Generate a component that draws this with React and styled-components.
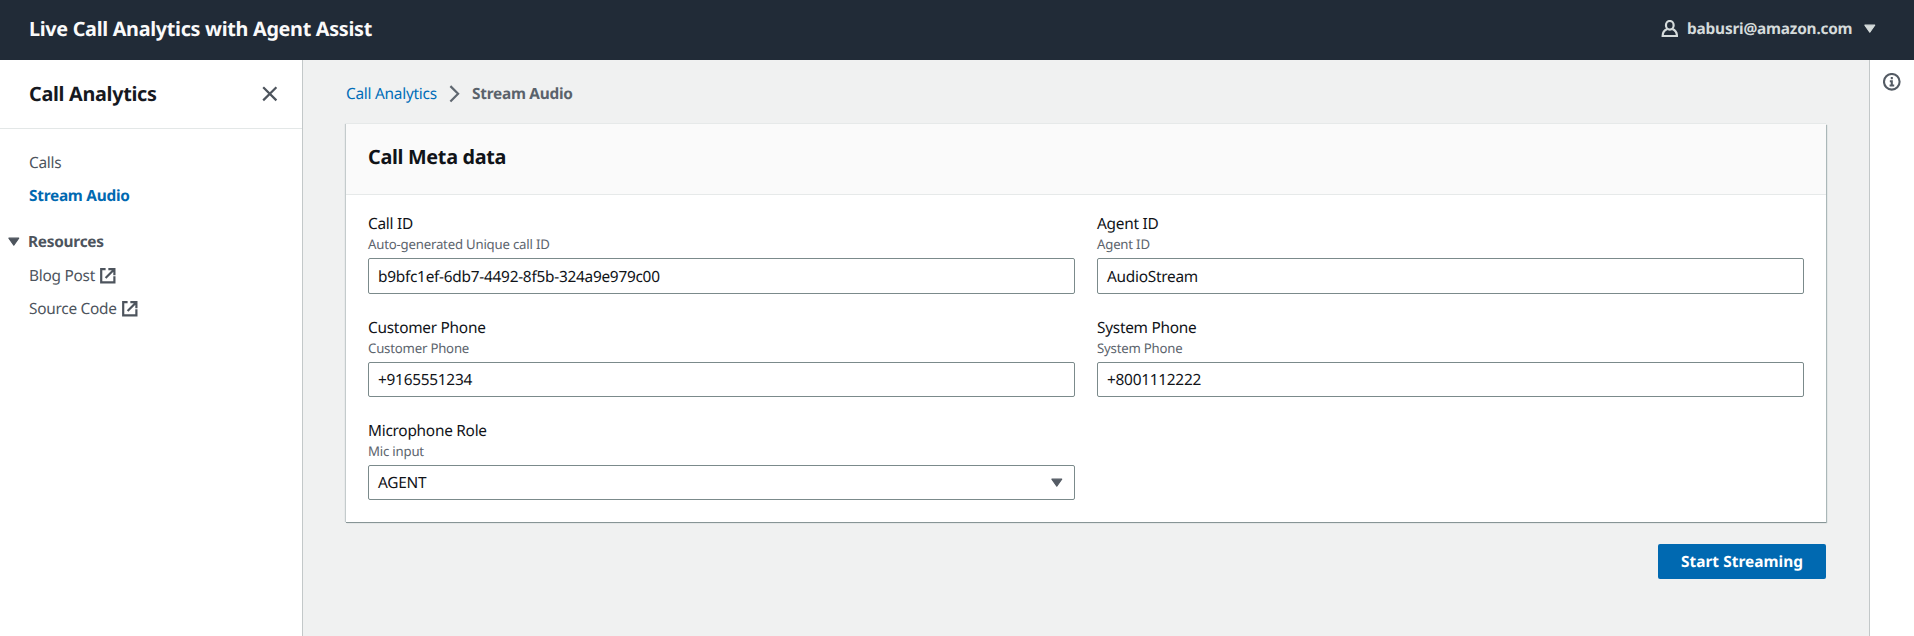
import React from 'react';
import styled, { createGlobalStyle } from 'styled-components';

const GlobalStyle = createGlobalStyle`
  *, *::before, *::after { box-sizing: border-box; }
  html, body, #root { height: 100%; }
  body {
    margin: 0;
    overflow: hidden;
    font-family: 'Noto Sans', 'Open Sans', sans-serif;
    font-size: 15.4px;
    line-height: 24px;
    letter-spacing: -0.26px;
    text-rendering: geometricPrecision;
    color: #101318;
    background: #f0f1f1;
  }
`;

const Page = styled.div`
  display: flex;
  flex-direction: column;
  height: 636px;
`;

const TopBar = styled.header`
  display: flex;
  justify-content: space-between;
  align-items: center;
  flex: 0 0 60px;
  padding: 0 35px 3px 29px;
  background: #212b37;
`;

const AppTitle = styled.div`
  font-size: 19.8px;
  letter-spacing: -0.3px;
  font-weight: 700;
  line-height: 24px;
  color: #fafafa;
`;

const UserMenu = styled.div`
  display: flex;
  align-items: center;
  font-weight: 700;
  color: #d5dbdb;
`;

const UserName = styled.span`
  margin: 0 9px 0 9px;
  letter-spacing: -0.22px;
`;

const Icon = styled.svg`
  display: block;
  flex: none;
  width: 17.6px;
  height: 17.6px;
  fill: none;
  stroke: currentColor;
  stroke-width: 2;
`;

const Body = styled.div`
  display: flex;
  flex: 1;
  min-height: 0;
`;

const Sidebar = styled.nav`
  flex: 0 0 303px;
  background: #fff;
  border-right: 1px solid #c3c8c9;
  color: #4d545d;
`;

const SidebarHeader = styled.div`
  display: flex;
  align-items: center;
  justify-content: space-between;
  height: 69px;
  padding: 0 23px 0 29px;
  border-bottom: 1px solid #e3e7e7;
`;

const SidebarTitle = styled.h2`
  margin: 0;
  font-size: 19.8px;
  letter-spacing: -0.29px;
  line-height: 24px;
  color: #16191f;
`;

const NavList = styled.div`
  display: flex;
  flex-direction: column;
  gap: 9px;
  padding: 22px 29px 0;
`;

const NavLink = styled.a`
  display: flex;
  align-items: center;
  gap: 4.5px;
  height: 24px;
  color: ${(p) => (p.$active ? '#0069b1' : 'inherit')};
  font-weight: ${(p) => (p.$active ? 700 : 400)};
`;

const NavSection = styled.div`
  display: flex;
  align-items: center;
  gap: 5.4px;
  height: 24px;
  margin: 13px 0 1px -24px;
  font-weight: 700;
`;

const Main = styled.main`
  flex: 1;
  padding: 22px 43px 0;
  background: #f0f1f1;
`;

const Breadcrumbs = styled.div`
  display: flex;
  align-items: center;
  height: 24px;
  color: #5f6770;
`;

const Crumb = styled.span`
  color: ${(p) => (p.$current ? '#5a626b' : '#006db8')};
  font-weight: ${(p) => (p.$current ? 700 : 400)};
`;

const CrumbIcon = styled.span`
  margin: 0 8.5px 0 9.2px;
`;

const Card = styled.section`
  height: 398px;
  margin-top: 18px;
  background: #fff;
  box-shadow: 0 -1px 0 #e6e9e9, 0 1px 0 #879596, 1px 1px 1px #aab7b8, -1px 0 1px #c4cbcc;
`;

const CardHeader = styled.div`
  display: flex;
  align-items: center;
  height: 71px;
  padding: 0 22px 5px;
  background: #fafafa;
  border-bottom: 1px solid #e6e9e9;
`;

const CardTitle = styled.h2`
  margin: 0;
  font-size: 19.8px;
  letter-spacing: -0.3px;
  line-height: 24px;
`;

const FormGrid = styled.div`
  display: grid;
  grid-template-columns: 1fr 1fr;
  column-gap: 22px;
  grid-template-rows: 104px 103px 84px;
  padding: 17px 22px 0;
`;

const Field = styled.label`
  display: flex;
  flex-direction: column;
`;

const Label = styled.span`
  line-height: 24px;
`;

const Hint = styled.span`
  margin-bottom: 5px;
  font-size: 13.2px;
  line-height: 17px;
  letter-spacing: -0.2px;
  color: #5c646d;
`;

const Control = styled.span`
  display: flex;
  align-items: center;
  justify-content: space-between;
  height: ${(p) => (p.$tall ? 36 : 35)}px;
  padding: ${(p) => (p.$tall ? 1 : 0)}px 8px 0 9px;
  border: 1px solid #7b8a8b;
  border-radius: 2px;
`;

const Arrow = styled.span`
  color: #545b64;
`;

const Actions = styled.div`
  display: flex;
  justify-content: flex-end;
  margin-top: 22px;
`;

const PrimaryButton = styled.button`
  display: flex;
  align-items: flex-start;
  justify-content: center;
  width: 168px;
  height: 35px;
  padding: 6px 0 0;
  border: 0;
  border-radius: 2px;
  background: #0069b1;
  color: #fff;
  font: inherit;
  font-weight: 700;
  letter-spacing: 0.05px;
  text-rendering: geometricPrecision;
`;

const ToolsRail = styled.aside`
  display: flex;
  justify-content: center;
  flex: 0 0 45px;
  padding-top: 13px;
  background: #fff;
  border-left: 1px solid #c3c8c9;
  color: #545b64;
`;

const CaretDown = () => (
  <Icon viewBox="0 0 16 16">
    <path d="M3.500 4.700h9l-4.500 6.400z" fill="currentColor" strokeWidth="1" strokeLinejoin="round" />
  </Icon>
);

const External = () => (
  <Icon viewBox="0 0 16 16">
    <path d="M14 8.500V14H2V2h4M8.500 2H14v5.500M6 10l7.700-7.700" />
  </Icon>
);

const fields = [
  { label: 'Call ID', hint: 'Auto-generated Unique call ID', value: 'b9bfc1ef-6db7-4492-8f5b-324a9e979c00', tall: true },
  { label: 'Agent ID', hint: 'Agent ID', value: 'AudioStream', tall: true },
  { label: 'Customer Phone', hint: 'Customer Phone', value: '+9165551234' },
  { label: 'System Phone', hint: 'System Phone', value: '+8001112222' },
  { label: 'Microphone Role', hint: 'Mic input', value: 'AGENT', select: true },
];

export default function App() {
  return (
    <Page>
      <GlobalStyle />
      <TopBar>
        <AppTitle>Live Call Analytics with Agent Assist</AppTitle>
        <UserMenu>
          <Icon viewBox="0 0 16 16">
            <ellipse cx="8" cy="4.800" rx="3.500" ry="3.900" />
            <path d="M5.700 8.200C3 9.200 1.500 11.500 1.500 14.600h13C14.500 11.500 13 9.200 10.300 8.200" />
          </Icon>
          <UserName>babusri@amazon.com</UserName>
          <CaretDown />
        </UserMenu>
      </TopBar>
      <Body>
        <Sidebar>
          <SidebarHeader>
            <SidebarTitle>Call Analytics</SidebarTitle>
            <Icon viewBox="0 0 16 16">
              <path d="M2 2l12 12M14 2L2 14" />
            </Icon>
          </SidebarHeader>
          <NavList>
            <NavLink>Calls</NavLink>
            <NavLink $active>Stream Audio</NavLink>
            <NavSection>
              <CaretDown />
              Resources
            </NavSection>
            <NavLink>Blog Post <External /></NavLink>
            <NavLink>Source Code <External /></NavLink>
          </NavList>
        </Sidebar>
        <Main>
          <Breadcrumbs>
            <Crumb>Call Analytics</Crumb>
            <CrumbIcon>
              <Icon viewBox="0 0 16 16">
                <path d="M4 1l7 7-7 7" />
              </Icon>
            </CrumbIcon>
            <Crumb $current>Stream Audio</Crumb>
          </Breadcrumbs>
          <Card>
            <CardHeader>
              <CardTitle>Call Meta data</CardTitle>
            </CardHeader>
            <FormGrid>
              {fields.map((f) => (
                <Field key={f.label}>
                  <Label>{f.label}</Label>
                  <Hint>{f.hint}</Hint>
                  <Control $tall={f.tall}>
                    {f.value}
                    {f.select && <Arrow><CaretDown /></Arrow>}
                  </Control>
                </Field>
              ))}
            </FormGrid>
          </Card>
          <Actions>
            <PrimaryButton>Start Streaming</PrimaryButton>
          </Actions>
        </Main>
        <ToolsRail>
          <Icon viewBox="0 0 16 16">
            <circle cx="8" cy="8" r="7.100" strokeWidth="1.900" />
            <path d="M8 3.700v2M6.200 7.500H8V11M6 11.300h4.200" strokeWidth="1.900" />
          </Icon>
        </ToolsRail>
      </Body>
    </Page>
  );
}
